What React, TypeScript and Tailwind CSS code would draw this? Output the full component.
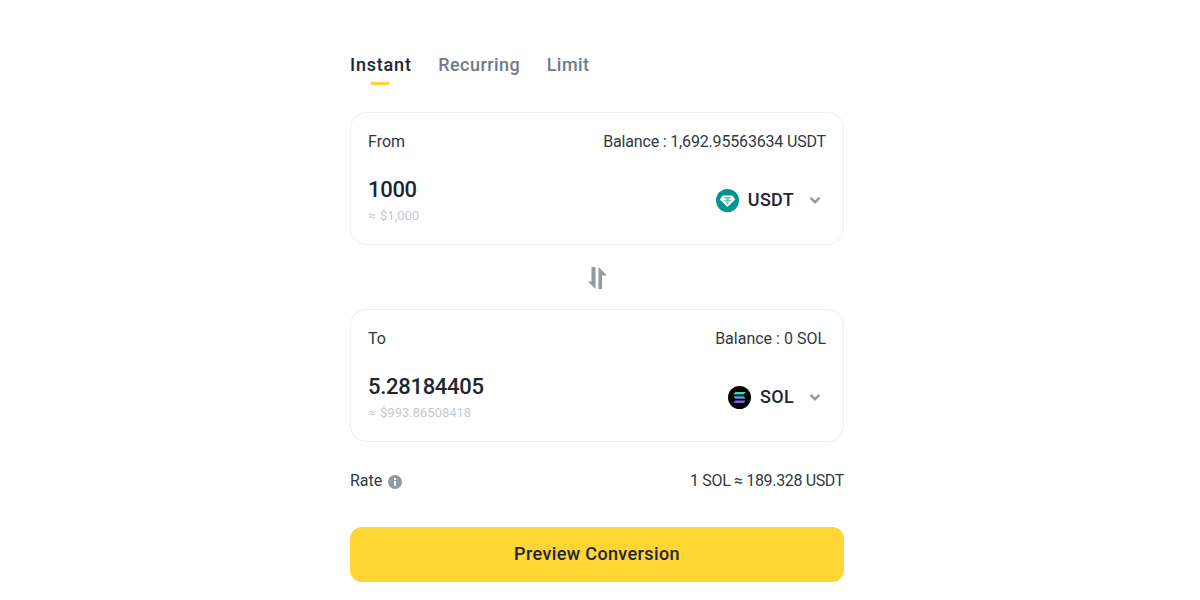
import React from "react";

function Chevron() {
  return (
    <svg width="16" height="16" viewBox="0 0 16 16" className="ml-[13px]">
      <path d="M3.6 5.8 8 10.2l4.4-4.4" fill="none" stroke="#929AA5" strokeWidth="2.4" />
    </svg>
  );
}

function Usdt() {
  return (
    <svg width="23" height="23" viewBox="0 0 23 23">
      <circle cx="11.5" cy="11.5" r="11.5" fill="#009393" />
      <path d="M6.6 6.4h9.8l2.8 4L11.5 18 3.8 10.4z" fill="#fff" />
      <path d="M8.2 8.1h6.6v1.5h-2.3v.9l2.6.5v.9l-2.6.5v3h-2v-3l-2.6-.5v-.9l2.6-.5v-.9H8.2z" fill="#6cc7c3" />
    </svg>
  );
}

function Sol() {
  return (
    <svg width="23" height="23" viewBox="0 0 23 23">
      <defs>
        <linearGradient id="solg" x1="0" y1="0" x2="0" y2="1">
          <stop offset="0" stopColor="#2BE8B0" />
          <stop offset="0.5" stopColor="#5C9DDB" />
          <stop offset="1" stopColor="#A33CF0" />
        </linearGradient>
      </defs>
      <circle cx="11.5" cy="11.5" r="11.5" fill="#000" />
      <path
        d="M7.3 5.9h10.4l-2 2.5H5.3zM5.3 10.2h10.4l2 2.5H7.3zM7.3 14.6h10.4l-2 2.5H5.3z"
        fill="url(#solg)"
      />
    </svg>
  );
}

function Card({
  label,
  balance,
  balanceClass,
  amount,
  usd,
  icon,
  coin,
}: {
  label: string;
  balance: string;
  balanceClass: string;
  amount: string;
  usd: string;
  icon: React.ReactNode;
  coin: string;
}) {
  return (
    <div className="h-[133px] rounded-[16px] border border-[#EEF0F2] px-[17px] pt-[18px]">
      <div className="flex h-[22px] items-center justify-between text-[16px] leading-[22px] text-[#32383F]">
        <span>{label}</span>
        <span className={balanceClass}>{balance}</span>
      </div>
      <div className="mt-[21px] flex items-start justify-between">
        <div>
          <div className="text-[22px] leading-[32px] font-medium tracking-[-0.3px] text-[#202630]">{amount}</div>
          <div className="mt-[2px] text-[13px] leading-[16px] text-[#C4C9D0]">
            <span className="mr-[1.5px]">≈</span> {usd}
          </div>
        </div>
        <div className="mt-[14px] flex items-center">
          {icon}
          <span className="ml-[9px] text-[18px] leading-[24px] font-medium tracking-[0.3px] text-[#202630]">{coin}</span>
          <Chevron />
          <span className="w-[3px]" />
        </div>
      </div>
    </div>
  );
}

export default function App() {
  return (
    <div className="flex min-h-[600px] w-full justify-center bg-white pr-[6px] font-['Roboto',sans-serif]">
      <div className="w-[494px] pt-[52px]">
        <div className="flex h-[33px] gap-[26.5px] text-[18px] leading-[26px] font-medium tracking-[0.45px] text-[#707A8A]">
          <div className="flex flex-col items-center tracking-[0.8px] text-[#202630]">
            <span>Instant</span>
            <span className="mt-[4px] mr-[2px] h-[3px] w-[18px] bg-[#FCD535]" />
          </div>
          <span>Recurring</span>
          <span>Limit</span>
        </div>
        <div className="mt-[27px]">
          <Card
            label="From"
            balance="Balance : 1,692.95563634 USDT"
            balanceClass="tracking-[-0.17px]"
            amount="1000"
            usd="$1,000"
            icon={<Usdt />}
            coin="USDT"
          />
        </div>
        <div className="flex h-[64px] items-center justify-center pt-[1px]">
          <svg width="19" height="22" viewBox="0 0 19 22">
            <path d="M7.5 0v22L0 14.5h3.5V0z" fill="#929AA5" />
            <path d="M10.5 22V0L19 8.5h-5V22z" fill="#929AA5" />
          </svg>
        </div>
        <Card
          label="To"
          balance="Balance : 0 SOL"
          balanceClass="tracking-normal"
          amount="5.28184405"
          usd="$993.86508418"
          icon={<Sol />}
          coin="SOL"
        />
        <div className="mt-[27px] flex h-[24px] items-center justify-between text-[16px] leading-[24px] text-[#32383F]">
          <div className="flex items-center">
            <span>Rate</span>
            <svg width="14" height="14" viewBox="0 0 14 14" className="mt-[2px] ml-[6px]">
              <circle cx="7" cy="7" r="7" fill="#929AA5" />
              <rect x="6" y="6" width="2" height="5" fill="#fff" />
              <rect x="6" y="3" width="2" height="2" fill="#fff" />
            </svg>
          </div>
          <span className="tracking-[-0.35px]">1 SOL ≈ 189.328 USDT</span>
        </div>
        <button className="mt-[34px] flex h-[55px] w-full items-center justify-center rounded-[12px] bg-[#FDD535] pb-[2px] text-[18px] font-medium tracking-[0.37px] text-[#202630]">
          Preview Conversion
        </button>
      </div>
    </div>
  );
}
